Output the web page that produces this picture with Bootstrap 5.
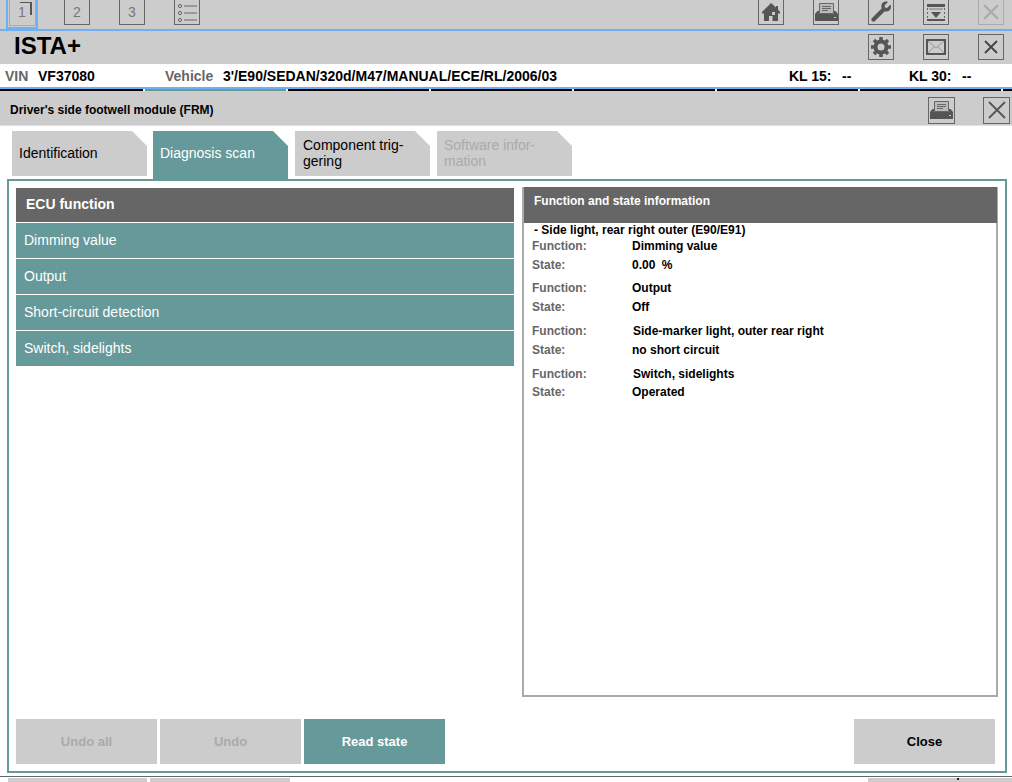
<!doctype html>
<html lang="en"><head><meta charset="utf-8"><title>ISTA+</title>
<link href="https://cdn.jsdelivr.net/npm/bootstrap@5.3.0/dist/css/bootstrap.min.css" rel="stylesheet">
<style>
html,body{height:782px;overflow:hidden;background:#fff}
body,button{font-family:"Liberation Sans",Arial,sans-serif;color:#000}
.topbar{height:29px;background:#ccc}
.blue-rule{height:2px;background:#6fb0f5}
.tool{width:26px;height:25px;border:1px solid #666;border-top:0;display:flex;align-items:center;justify-content:center;color:#777;font-size:14px;padding:0;background:transparent}
.tool svg{display:block}
.left-tools{padding-left:8px;gap:29px}
.sel-wrap{width:32px;height:29px;margin-left:-2px;margin-right:-3px;border:2px solid #6fb0f5;border-top:0;display:flex;justify-content:center;flex:none}
.sel-wrap .tool{position:relative;width:27px;height:26px;border:1px solid #aaa;border-top:0}
.sel-wrap .tool::after{content:"";position:absolute;top:2px;right:3px;width:12px;height:13px;border-top:1px solid #555;border-right:2px solid #555}
.right-tools{margin-left:auto;padding-right:8px;gap:29px}
.brand-row{height:33px;background:#ccc;padding:0 8px 0 14px}
.brand-row h1{font-size:24px;font-weight:700;margin:-3px 0 0;line-height:30px}
.tool2{width:26px;height:26px;border:1px solid #666;display:flex;align-items:center;justify-content:center;padding:0;background:transparent}
.brand-row .tool2-wrap{gap:29px;margin-left:auto;margin-top:-1px}
.info-row{height:23px;background:#fff;font-size:14px;font-weight:700;line-height:25px;position:relative}
.info-row span{position:absolute;top:0;white-space:nowrap}
.muted-lbl{color:#666}
.tabline{height:2px;background:#000;display:flex}
.tabline i{display:block;height:2px;background:#000;border-right:2px solid #fff;flex:none}
.tabline i.on{background:#669999}
.gap-gray{height:1px;background:#ccc}
.mod-head{height:33px;background:#ccc;padding:2px 2px 0 10px;font-size:12px;font-weight:700}
.mod-tools{margin-left:auto;gap:28px;margin-top:-2px}
.mod-tools .tool2{width:27px;height:27px;margin-top:3px}
.white-line{height:1px;background:#e0e0e0}
.tabs-row{display:flex;padding:5px 0 0 12px;gap:7px;height:53px}
.tabx{width:135px;height:45px;background:#ccc;font-size:14px;line-height:16px;padding:0 7px 2px;display:flex;align-items:center;clip-path:polygon(0 0,120px 0,135px 15px,135px 100%,0 100%);color:#000}
.tabx.first-tab{margin-right:-1px}
.tabx.act{background:#669999;color:#fff;height:49px;padding-bottom:6px}
.tabx.nudge-tab{padding-left:8px}
.tabx.dis{color:#aaa}
.panel-box{margin-left:7px;width:1000px;height:594px;border:2px solid #669999;padding:7px;display:flex;flex-direction:column;background:#fff}
.cols{display:flex;gap:8px;height:509px}
.leftcol{width:498px;flex:none}
.ecu-head{height:34px;background:#666;color:#fff;font-weight:700;font-size:14px;line-height:32px;padding-left:10px}
.ecu-row{height:35px;margin-top:1px;background:#669999;color:#fff;font-size:14px;line-height:35px;padding-left:8px}
.rightcol{width:476px;flex:none;border:2px solid #aaa;border-top:0;height:510px;margin-top:-1px;font-size:12px;font-weight:700;line-height:14px}
.rc-head{height:36px;background:#666;color:#fff;padding:7px 0 0 10px;margin-right:-1px}
.rc-title{padding:0 0 0 10px;height:15px;line-height:14px}
.kv{display:flex;height:19px;line-height:19px;padding-left:8px}
.kv b{width:100px;color:#666;flex:none}
.kv.first{margin-top:-1px}
.kv.grp{margin-top:4px}
.kv.grp2{margin-top:5px}
.kv.up{margin-top:-1px}
.kv .nudged{margin-left:1px}
.kv .pct{margin-left:3px}
.btn-row{display:flex;gap:3px;margin-top:22px}
.act-btn{width:141px;height:45px;border:0;padding:0;background:#ccc;font-size:13px;font-weight:700;color:#000}
.act-btn:disabled{color:#aaa;opacity:1}
.act-btn.go{background:#669999;color:#fff}
.act-btn.end{margin-left:auto;margin-right:3px}
.foot-rule{margin-top:3px;height:1px;background:#666}
.peek{display:flex;padding:1px 0 0 8px;gap:3px;position:relative}
.peek i{display:block;height:8px;width:139px;background:#ccc;flex:none;position:relative}
.peek i + i{width:140px}
.peek i.rt{width:144px;margin-left:auto}
.peek i.rt::after{content:"";position:absolute;left:89px;top:0;width:2px;height:2px;background:#222}
</style></head>
<body>
<div class="topbar d-flex">
  <div class="d-flex left-tools">
    <div class="sel-wrap"><button class="tool" type="button">1</button></div>
    <button class="tool" type="button">2</button>
    <button class="tool" type="button">3</button>
    <button class="tool" type="button" aria-label="List"><svg width="22" height="22" viewBox="0 0 22 22" fill="none" stroke="#666"><circle cx="4" cy="5" r="1.600"/><circle cx="4" cy="12" r="1.600"/><circle cx="4" cy="19" r="1.600"/><path d="M8 5h13M8 12h13M8 19h13" stroke-width="1.200"/></svg></button>
  </div>
  <div class="d-flex right-tools">
    <button class="tool" type="button" aria-label="Home"><svg width="20" height="20" viewBox="0 0 20 20"><path fill="#555" d="M10 1l5 4.500V4h2v3.300L19 10v1.500h-2V19h-5.500v-5H8v5H3v-7.500H1V10z"/><rect x="11" y="10" width="3" height="3" fill="#ccc"/></svg></button>
    <button class="tool" type="button" aria-label="Print"><svg width="23" height="20" viewBox="0 0 23 20"><path fill="#bbb" stroke="#666" d="M4.500 1.500h14v10h-14z"/><path stroke="#666" d="M7 4.500h9M7 6.500h9M7 8.500h6"/><path fill="#555" d="M2.500 9H4v3h15V9h1.500L23 12v7H0v-7z"/><rect x="19" y="15" width="2" height="1" fill="#ccc"/></svg></button>
    <button class="tool" type="button" aria-label="Tools"><svg width="22" height="22" viewBox="0 0 22 22"><path fill="#555" d="M20.500 3.500L17 7l-2-.5-.5-2L18 1c-2.500-1-5.300 0-6.300 2.300-.6 1.400-.4 2.800.1 3.900L2 17c-.9.900-.9 2.100 0 3s2.100.9 3 0l9.800-9.800c1.300.5 2.600.5 3.800-.1 2.300-1.100 3-4.300 1.900-6.600z"/></svg></button>
    <button class="tool" type="button" aria-label="Download"><svg width="20" height="17" viewBox="0 0 20 17"><rect x="1" y="0" width="18" height="3" fill="#555"/><rect x="1" y="15" width="18" height="2" fill="#555"/><path fill="#555" d="M5 8h10l-5 6z"/><path stroke="#666" stroke-dasharray="2 2" d="M1.500 4v10M18.500 4v10"/><path stroke="#777" d="M3 5h14"/></svg></button>
    <button class="tool" type="button" style="border-color:#aaa" aria-label="Close disabled"><svg width="20" height="20" viewBox="0 0 20 20" stroke="#aaa" stroke-width="2"><path d="M3 3l14 14M17 3L3 17"/></svg></button>
  </div>
</div>
<div class="blue-rule"></div>
<div class="brand-row d-flex align-items-center">
  <h1>ISTA+</h1>
  <div class="d-flex tool2-wrap">
    <button class="tool2" type="button" aria-label="Settings"><svg width="20" height="20" viewBox="0 0 20 20"><circle cx="10" cy="10" r="5.500" fill="none" stroke="#555" stroke-width="4"/><g stroke="#555" stroke-width="3.500"><path d="M10 0v4M10 16v4M0 10h4M16 10h4M3 3l2.500 2.500M14.500 14.500L17 17M17 3l-2.500 2.500M5.500 14.500L3 17"/></g></svg></button>
    <button class="tool2" type="button" aria-label="Mail"><svg width="20" height="16" viewBox="0 0 20 16" fill="none"><path stroke="#999" d="M2 2l8 7 8-7M2 14l6-6M18 14l-6-6"/><rect x="1" y="1" width="18" height="14" stroke="#555" stroke-width="2"/></svg></button>
    <button class="tool2" type="button" aria-label="Close"><svg width="14" height="14" viewBox="0 0 14 14" stroke="#444" stroke-width="1.800"><path d="M1 1l12 12M13 1L1 13"/></svg></button>
  </div>
</div>
<div class="info-row">
  <span class="muted-lbl" style="left:5px">VIN</span><span style="left:38px">VF37080</span>
  <span class="muted-lbl" style="left:165px">Vehicle</span><span style="left:223px">3'/E90/SEDAN/320d/M47/MANUAL/ECE/RL/2006/03</span>
  <span style="left:789px">KL 15:</span><span style="left:842px">--</span>
  <span style="left:909px">KL 30:</span><span style="left:962px">--</span>
</div>
<div class="blue-rule"></div>
<div class="tabline"><i style="width:145px"></i><i class="on" style="width:143px"></i><i style="width:143px"></i><i style="width:143px"></i><i style="width:143px"></i><i style="width:143px"></i><i style="width:143px"></i><i style="flex:1;border:0"></i></div>
<div class="gap-gray"></div>
<div class="mod-head d-flex align-items-center">
  <span>Driver's side footwell module (FRM)</span>
  <div class="d-flex mod-tools">
    <button class="tool2" type="button" aria-label="Print"><svg width="23" height="20" viewBox="0 0 23 20"><path fill="#bbb" stroke="#666" d="M4.500 1.500h14v10h-14z"/><path stroke="#666" d="M7 4.500h9M7 6.500h9M7 8.500h6"/><path fill="#555" d="M2.500 9H4v3h15V9h1.500L23 12v7H0v-7z"/><rect x="19" y="15" width="2" height="1" fill="#ccc"/></svg></button>
    <button class="tool2" type="button" aria-label="Close"><svg width="20" height="20" viewBox="0 0 20 20" stroke="#555" stroke-width="1.800"><path d="M2 2l16 16M18 2L2 18"/></svg></button>
  </div>
</div>
<div class="white-line"></div>
<div class="tabs-row">
  <div class="tabx first-tab">Identification</div>
  <div class="tabx act">Diagnosis scan</div>
  <div class="tabx nudge-tab">Component trig-<br>gering</div>
  <div class="tabx dis">Software infor-<br>mation</div>
</div>
<div class="panel-box">
  <div class="cols">
    <div class="leftcol">
      <div class="ecu-head">ECU function</div>
      <div class="ecu-row">Dimming value</div>
      <div class="ecu-row">Output</div>
      <div class="ecu-row">Short-circuit detection</div>
      <div class="ecu-row">Switch, sidelights</div>
    </div>
    <div class="rightcol">
      <div class="rc-head">Function and state information</div>
      <div class="rc-title">- Side light, rear right outer (E90/E91)</div>
      <div class="kv first"><b>Function:</b><span>Dimming value</span></div>
      <div class="kv"><b>State:</b><span>0.00<span class="pct"> %</span></span></div>
      <div class="kv grp"><b>Function:</b><span>Output</span></div>
      <div class="kv"><b>State:</b><span>Off</span></div>
      <div class="kv grp2"><b>Function:</b><span class="nudged">Side-marker light, outer rear right</span></div>
      <div class="kv"><b>State:</b><span>no short circuit</span></div>
      <div class="kv grp2"><b>Function:</b><span class="nudged">Switch, sidelights</span></div>
      <div class="kv up"><b>State:</b><span>Operated</span></div>
    </div>
  </div>
  <div class="btn-row">
    <button class="act-btn" type="button" disabled>Undo all</button>
    <button class="act-btn" type="button" disabled>Undo</button>
    <button class="act-btn go" type="button">Read state</button>
    <button class="act-btn end" type="button">Close</button>
  </div>
</div>
<div class="foot-rule"></div>
<div class="peek"><i></i><i></i><i class="rt"></i></div>
<script src="https://cdn.jsdelivr.net/npm/bootstrap@5.3.0/dist/js/bootstrap.bundle.min.js"></script>
</body></html>
